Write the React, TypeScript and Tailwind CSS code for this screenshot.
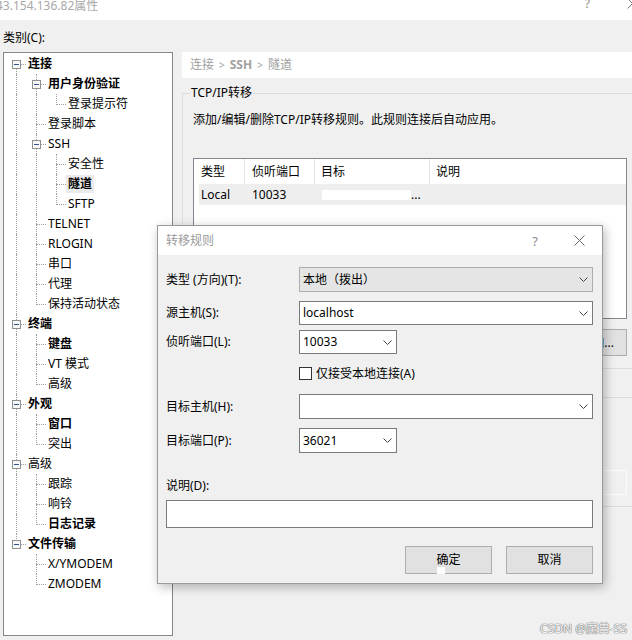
import React from "react";

type Node = { label: string; bold?: boolean; selected?: boolean; children?: Node[] };

const tree: Node[] = [
  {
    label: "连接",
    bold: true,
    children: [
      { label: "用户身份验证", bold: true, children: [{ label: "登录提示符" }] },
      { label: "登录脚本" },
      {
        label: "SSH",
        children: [{ label: "安全性" }, { label: "隧道", bold: true, selected: true }, { label: "SFTP" }],
      },
      { label: "TELNET" },
      { label: "RLOGIN" },
      { label: "串口" },
      { label: "代理" },
      { label: "保持活动状态" },
    ],
  },
  { label: "终端", bold: true, children: [{ label: "键盘", bold: true }, { label: "VT 模式" }, { label: "高级" }] },
  { label: "外观", bold: true, children: [{ label: "窗口", bold: true }, { label: "突出" }] },
  { label: "高级", children: [{ label: "跟踪" }, { label: "响铃" }, { label: "日志记录", bold: true }] },
  { label: "文件传输", bold: true, children: [{ label: "X/YMODEM" }, { label: "ZMODEM" }] },
];

type Row = { node: Node; guides: boolean[]; isLast: boolean; isFirst: boolean };

function flatten(nodes: Node[], guides: boolean[], level: number, out: Row[]) {
  nodes.forEach((n, i) => {
    const isLast = i === nodes.length - 1;
    out.push({ node: n, guides, isLast, isFirst: level === 0 && i === 0 });
    if (n.children) flatten(n.children, [...guides, !isLast], level + 1, out);
  });
  return out;
}

const rows = flatten(tree, [], 0, []);

function TreeRow({ row }: { row: Row }) {
  const vClass = row.isFirst ? "top-[10px] h-[10px]" : row.isLast ? "top-0 h-[11px]" : "top-0 h-[20px]";
  return (
    <div className="flex h-[20px] items-center">
      {row.guides.map((g, i) => (
        <div key={i} className="relative w-[20px] h-[20px] shrink-0">
          {g && <div className="absolute left-[10px] top-0 h-[20px] border-l border-dotted border-[#a0a0a0]" />}
        </div>
      ))}
      <div className="relative w-[20px] h-[20px] shrink-0">
        <div className={`absolute left-[10px] border-l border-dotted border-[#a0a0a0] ${vClass}`} />
        <div className="absolute left-[10px] top-[10px] w-[10px] border-t border-dotted border-[#a0a0a0]" />
        {row.node.children && (
          <div className="absolute left-[6px] top-[6px] w-[9px] h-[9px] border border-[#8f9092] bg-[#f8f8f8] flex items-center justify-center">
            <div className="w-[5px] h-[1px] bg-[#34528f]" />
          </div>
        )}
      </div>
      <span
        className={`px-[2px] py-[1px] leading-[16px] whitespace-nowrap ${row.node.bold ? "font-bold" : ""} ${
          row.node.selected ? "bg-[#ebebeb]" : ""
        }`}
      >
        {row.node.label}
      </span>
    </div>
  );
}

function Chevron() {
  return (
    <svg width="9" height="5" viewBox="0 0 9 5" className="shrink-0">
      <path d="M0.5 0.5 L4.5 4.5 L8.5 0.5" fill="none" stroke="#444" strokeWidth="1" />
    </svg>
  );
}

function XIcon({ color = "#555" }: { color?: string }) {
  return (
    <svg width="11" height="11" viewBox="0 0 11 11" className="shrink-0">
      <path d="M0.5 0.5 L10.5 10.5 M10.5 0.5 L0.5 10.5" fill="none" stroke={color} strokeWidth="1" />
    </svg>
  );
}

function FieldRow({ label, children }: { label: string; children: React.ReactNode }) {
  return (
    <div className="flex items-center">
      <div className="w-[133px] shrink-0 leading-[16px]">{label}</div>
      {children}
    </div>
  );
}

export default function App() {
  return (
    <div className="w-[632px] h-[640px] relative overflow-hidden bg-[#f0f0f0] text-[12px] leading-[16px] text-black font-['Noto_Sans','Noto_Sans_CJK_SC',sans-serif]">
      {/* window title bar */}
      <div className="h-[20px] bg-white flex items-start">
        <span className="ml-[-4px] mt-0 leading-[11px] text-[#a8a8a8] whitespace-nowrap">43.154.136.82属性</span>
        <span className="ml-auto mt-0 leading-[8px] text-[#8a8a8a]">?</span>
        <div className="ml-[37px] mr-[-6px] mt-[-2px]">
          <XIcon color="#777" />
        </div>
      </div>

      <div className="h-[32px] pl-[3px] pt-[10px] leading-[16px]">类别(C):</div>

      <div className="flex items-start">
        {/* tree */}
        <div className="ml-[3px] w-[170px] h-[584px] shrink-0 border border-[#828790] bg-white pl-[2px] pt-[1px]">
          {rows.map((r, i) => (
            <TreeRow key={i} row={r} />
          ))}
        </div>

        {/* right panel */}
        <div className="ml-[9px] w-[470px] shrink-0">
          <div className="h-[26px] bg-white flex items-center pl-[8px] text-[#a0a0a0] whitespace-nowrap">
            <span>连接</span>
            <span className="mx-[5px] text-[10px]">&gt;</span>
            <span className="font-bold">SSH</span>
            <span className="mx-[5px] text-[10px]">&gt;</span>
            <span>隧道</span>
          </div>

          {/* group box 1 */}
          <div className="mt-[15px] border border-[#dcdcdc] pb-[12px]">
            <div className="-mt-[9px] ml-[7px] px-[1px] w-fit bg-[#f0f0f0] leading-[16px]">TCP/IP转移</div>
            <div className="mt-[11px] ml-[10px] leading-[16px]">添加/编辑/删除TCP/IP转移规则。此规则连接后自动应用。</div>
            <div className="mt-[30px] ml-[10px] w-[434px] h-[161px] border border-[#828790] bg-white">
              <div className="flex h-[25px]">
                <div className="w-[51px] border-r border-[#e5e5e5] pl-[7px] flex items-center">类型</div>
                <div className="w-[70px] border-r border-[#e5e5e5] pl-[7px] flex items-center">侦听端口</div>
                <div className="w-[115px] border-r border-[#e5e5e5] pl-[6px] flex items-center">目标</div>
                <div className="flex-1 pl-[6px] flex items-center">说明</div>
              </div>
              <div className="ml-[5px] h-[21px] bg-[#eeeeee] flex items-center">
                <div className="w-[46px] pl-[2px]">Local</div>
                <div className="w-[70px] pl-[7px]">10033</div>
                <div className="pl-[7px] flex items-end">
                  <span className="inline-block w-[89px] h-[10px] bg-white" />
                  <span className="leading-[10px]">...</span>
                </div>
              </div>
            </div>
            <div className="mt-[10px] ml-[10px] w-[434px] flex justify-end">
              <div className="w-[75px] h-[27px] border border-[#adadad] bg-[#e1e1e1] flex items-center justify-end pr-[12px]">
                添加...
              </div>
            </div>
          </div>

          {/* group box 2 */}
          <div className="mt-[28px] border border-[#dcdcdc] pt-[72px] pb-[11px]">
            <div className="ml-[10px] w-[434px] flex justify-end">
              <div className="w-[75px] h-[25px] border border-[#fbfbfb] bg-[#f0f0f0]" />
            </div>
          </div>
        </div>
      </div>

      {/* dialog window */}
      <div className="absolute left-[157px] top-[225px] w-[446px] border border-[#9a9a9a] bg-[#f0f0f0] shadow-[2px_3px_10px_rgba(0,0,0,0.28)]">
        <div className="h-[29px] bg-white flex items-center pl-[8px]">
          <span className="text-[#9a9a9a]">转移规则</span>
          <span className="ml-auto text-[#8a8a8a] text-[13px]">?</span>
          <div className="ml-[36px] mr-[17px]">
            <XIcon color="#666" />
          </div>
        </div>

        <div className="pl-[8px] pr-[9px] pt-[12px] pb-[9px]">
          <FieldRow label="类型 (方向)(T):">
            <div className="w-[294px] h-[25px] border border-[#adadad] bg-[#e5e5e5] flex items-center justify-between pl-[3px] pr-[4px]">
              <span>本地（拨出）</span>
              <Chevron />
            </div>
          </FieldRow>
          <div className="mt-[9px]">
            <FieldRow label="源主机(S):">
              <div className="w-[294px] h-[24px] border border-[#7a7a7a] bg-white flex items-center justify-between pl-[3px] pr-[4px]">
                <span>localhost</span>
                <Chevron />
              </div>
            </FieldRow>
          </div>
          <div className="mt-[5px]">
            <FieldRow label="侦听端口(L):">
              <div className="w-[98px] h-[24px] border border-[#7a7a7a] bg-white flex items-center justify-between pl-[3px] pr-[4px]">
                <span>10033</span>
                <Chevron />
              </div>
            </FieldRow>
          </div>
          <div className="mt-[13px] ml-[133px] flex items-center h-[13px]">
            <div className="w-[13px] h-[13px] border border-[#333] bg-white shrink-0" />
            <span className="ml-[4px] leading-[16px]">仅接受本地连接(A)</span>
          </div>
          <div className="mt-[14px]">
            <FieldRow label="目标主机(H):">
              <div className="w-[294px] h-[25px] border border-[#7a7a7a] bg-white flex items-center justify-between pl-[3px] pr-[4px]">
                <span />
                <Chevron />
              </div>
            </FieldRow>
          </div>
          <div className="mt-[9px]">
            <FieldRow label="目标端口(P):">
              <div className="w-[98px] h-[25px] border border-[#7a7a7a] bg-white flex items-center justify-between pl-[3px] pr-[4px]">
                <span>36021</span>
                <Chevron />
              </div>
            </FieldRow>
          </div>
          <div className="mt-[25px] leading-[16px]">说明(D):</div>
          <div className="mt-[6px] w-[427px] h-[28px] border border-[#7a7a7a] bg-white" />
          <div className="mt-[18px] flex justify-end gap-[14px]">
            <div className="relative w-[87px] h-[28px] border border-[#adadad] bg-[#e1e1e1] flex items-center justify-center">
              确定
              <span className="absolute left-[31px] top-[20px] w-[8px] h-[7px] bg-white" />
            </div>
            <div className="w-[87px] h-[28px] border border-[#adadad] bg-[#e1e1e1] flex items-center justify-center">取消</div>
          </div>
        </div>
      </div>

      {/* watermark */}
      <div className="absolute right-[5px] bottom-[4px] text-[12px] leading-[14px] text-[#f4f4f4] [text-shadow:0_0_1px_#7a7a7a,0_0_1px_#7a7a7a,0_0_1px_#7a7a7a] whitespace-nowrap">
        CSDN @魔兽-SS
      </div>
    </div>
  );
}
